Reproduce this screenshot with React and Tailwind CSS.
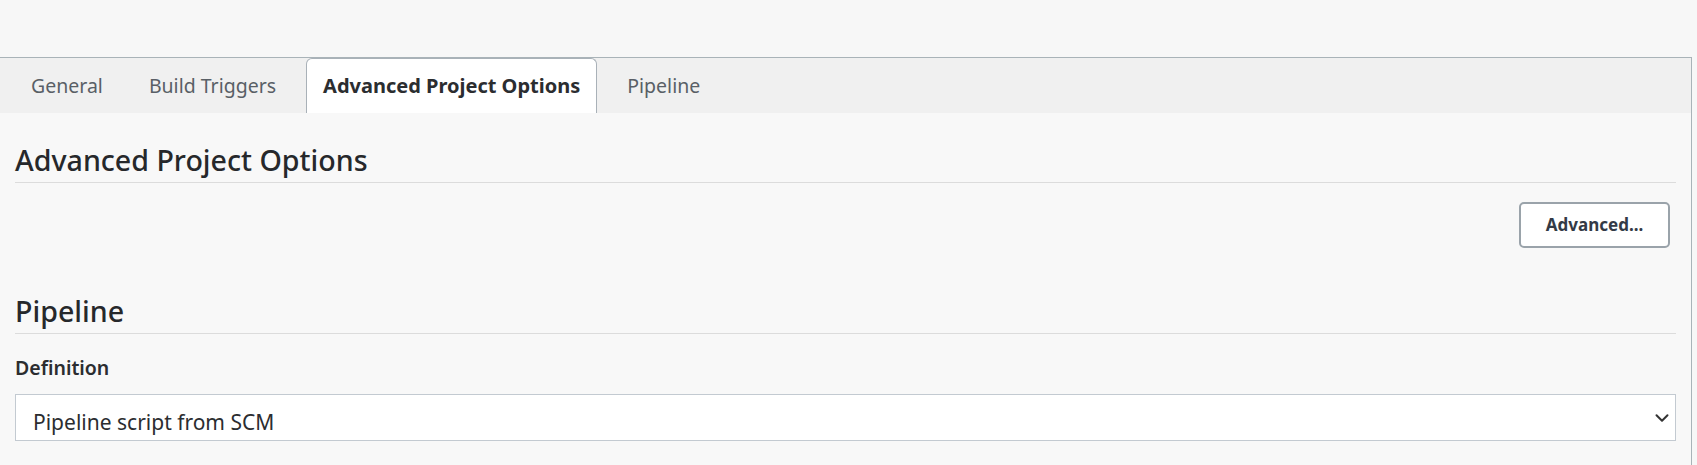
import { ChevronDown } from 'lucide-react'

const tabs = ['General', 'Build Triggers', 'Advanced Project Options', 'Pipeline']

function Tab({ label, active }) {
  if (active) {
    return (
      <div className="h-[55px] px-[16px] flex items-center bg-white border border-b-0 border-[#a9b1b8] rounded-t-[6px] text-[#2b2d30] font-bold text-[20px]">
        {label}
      </div>
    )
  }
  return (
    <div className="h-[55px] px-[16px] flex items-center text-[#595f66] text-[19.5px]">
      {label}
    </div>
  )
}

export default function App() {
  return (
    <div
      className="w-[1697px] h-[465px] overflow-hidden bg-[#f7f7f7]"
      style={{ fontFamily: '"Noto Sans", "Open Sans", sans-serif' }}
    >
      <div className="h-[57px]" />

      <div className="w-[1692px] h-[408px] border-t border-r border-[#a9b3b8] bg-[#f8f8f8]">
        <div className="h-[55px] bg-[#f0f0f0] flex items-end pl-[15px] gap-[14px]">
          {tabs.map(t => (
            <Tab key={t} label={t} active={t === 'Advanced Project Options'} />
          ))}
        </div>

        <div className="px-[15px]">
          <h2 className="mt-[30px] pb-[5px] text-[28.6px] font-medium leading-[34px] text-[#26282b] border-b border-[#dcdcdc]">
            Advanced Project Options
          </h2>

          <div className="flex justify-end pr-[6px]">
            <button className="mt-[19px] h-[46px] w-[151px] bg-white border-2 border-[#9aa3aa] rounded-[5px] text-[17px] font-bold text-[#333a46]">
              Advanced...
            </button>
          </div>

          <h2 className="mt-[46px] pb-[5px] text-[28.6px] font-medium leading-[34px] text-[#26282b] border-b border-[#dcdcdc]">
            Pipeline
          </h2>

          <div className="mt-[21px] text-[19.5px] leading-[26px] font-semibold text-[#2b2d30]">
            Definition
          </div>

          <div className="mt-[13px] h-[47px] bg-white border border-[#c3cad1] flex items-center justify-between pl-[17px] pr-[2px] text-[21px] text-[#2b2d30]">
            <span className="pt-[11px]">Pipeline script from SCM</span>
            <ChevronDown size={22} strokeWidth={2.2} className="text-[#333]" />
          </div>
        </div>
      </div>
    </div>
  )
}
